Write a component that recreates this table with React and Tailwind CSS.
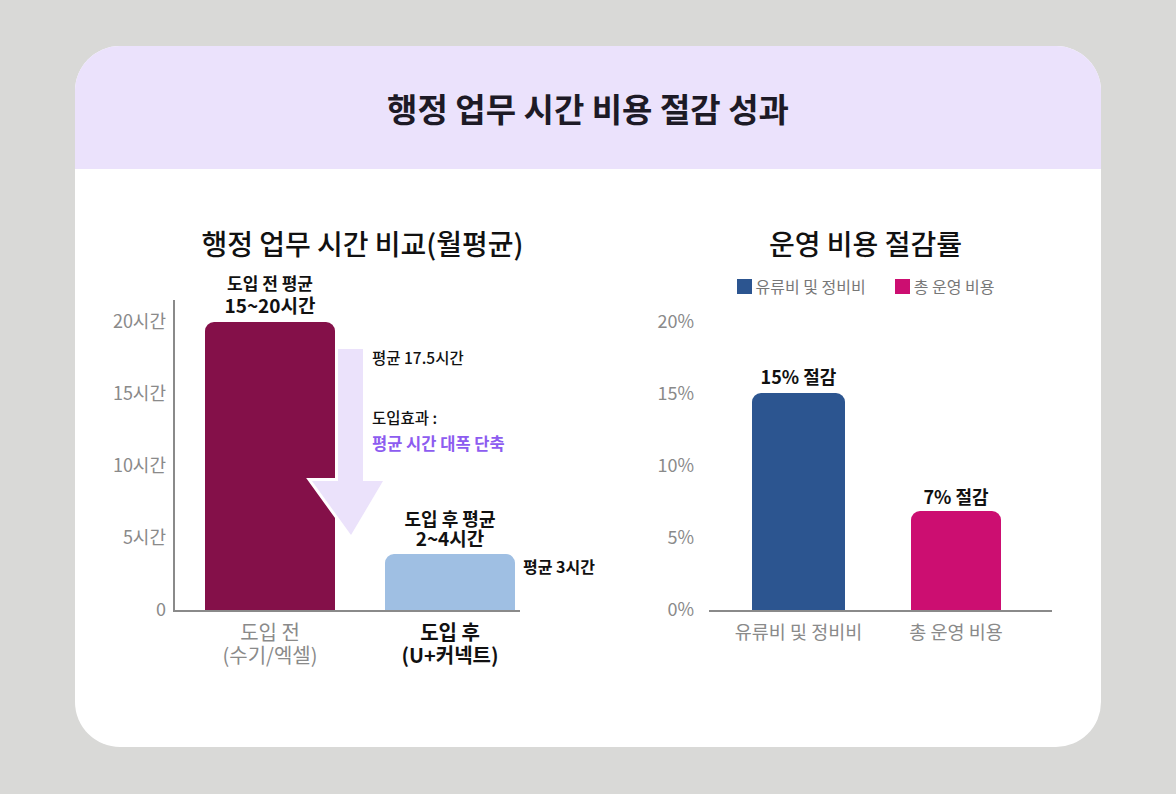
import React from "react";

const FONT = "font-['Noto_Sans_CJK_KR','Noto_Sans',sans-serif]";

const hourTicks = ["20시간", "15시간", "10시간", "5시간", "0"];
const pctTicks = ["20%", "15%", "10%", "5%", "0%"];

const YAxis = ({ ticks, width }) => (
  <div
    className={`${width} h-[318px] pt-[10px] flex flex-col justify-between items-end text-[18px] leading-[20px] text-[#8a8a8a]`}
  >
    {ticks.map((t) => (
      <span key={t}>{t}</span>
    ))}
  </div>
);

const TimeChart = () => (
  <div className="w-[575px] flex flex-col">
    <h2 className="mt-[57px] text-center text-[28px] leading-[34px] font-medium text-[#111]">
      행정 업무 시간 비교(월평균)
    </h2>

    <div className="ml-[25px] mt-[40px] flex items-start gap-[7px]">
      <YAxis ticks={hourTicks} width="w-[66px]" />

      <div className="flex flex-col">
        {/* plot */}
        <div className="relative w-[347px] h-[312px] border-l-2 border-b-2 border-[#8a8a8a] pl-[30px] flex items-end gap-[50px]">
          <div className="w-[130px] flex flex-col items-center">
            <div className="flex flex-col items-center font-semibold text-[#111] mb-[6px] whitespace-nowrap">
              <span className="text-[17px] leading-[22px]">도입 전 평균</span>
              <span className="text-[19px] leading-[22px]">15~20시간</span>
            </div>
            <div className="w-[130px] h-[288px] rounded-t-[9px] bg-[#841049]" />
          </div>

          <div className="w-[130px] flex flex-col items-center">
            <div className="flex flex-col items-center font-bold text-[#111] mb-[6px] whitespace-nowrap">
              <span className="text-[18px] leading-[20px]">도입 후 평균</span>
              <span className="text-[19px] leading-[20px]">2~4시간</span>
            </div>
            <div className="relative w-[130px] h-[56px] rounded-t-[9px] bg-[#9fbfe3]">
              <span className="absolute left-full ml-[8px] top-[2px] text-[16px] leading-[20px] font-bold text-[#111] whitespace-nowrap">
                평균 3시간
              </span>
            </div>
          </div>

          {/* arrow */}
          <svg
            className="absolute left-[130px] top-[40px]"
            width="90"
            height="205"
            viewBox="0 0 90 205"
          >
            <polygon
              points="33,9 58,9 58,141 78,141 46,195 7,141 33,141"
              fill="#ebe2fb"
              stroke="#ffffff"
              strokeWidth="6"
              strokeLinejoin="miter"
              paintOrder="stroke"
            />
          </svg>

          <div className="absolute left-[197px] top-[47px] flex flex-col leading-[20px] whitespace-nowrap">
            <span className="text-[15.5px] font-medium text-[#111]">평균 17.5시간</span>
            <span className="mt-[40px] text-[15.5px] font-medium text-[#111]">도입효과 :</span>
            <span className="mt-[6px] text-[16.5px] font-bold text-[#8d5cf0]">평균 시간 대폭 단축</span>
          </div>
        </div>

        {/* x labels */}
        <div className="pl-[32px] mt-[8px] flex gap-[50px] text-[20px] leading-[23px] whitespace-nowrap">
          <div className="w-[130px] flex flex-col items-center text-[#8a8a8a]">
            <span>도입 전</span>
            <span>(수기/엑셀)</span>
          </div>
          <div className="w-[130px] flex flex-col items-center font-bold text-[#111]">
            <span>도입 후</span>
            <span>(U+커넥트)</span>
          </div>
        </div>
      </div>
    </div>
  </div>
);

const CostChart = () => (
  <div className="w-[451px] pr-[20px] flex flex-col">
    <h2 className="mt-[57px] text-center text-[28px] leading-[34px] font-medium text-[#111]">
      운영 비용 절감률
    </h2>

    <div className="mt-[16px] flex justify-center gap-[29px] text-[16px] leading-[20px] text-[#777]">
      <div className="flex items-center gap-[4px]">
        <span className="w-[15px] h-[15px] bg-[#2c5590]" />
        <span>유류비 및 정비비</span>
      </div>
      <div className="flex items-center gap-[4px]">
        <span className="w-[15px] h-[15px] bg-[#cc0e71]" />
        <span>총 운영 비용</span>
      </div>
    </div>

    <div className="mt-[4px] flex items-start gap-[15px]">
      <YAxis ticks={pctTicks} width="w-[44px]" />

      <div className="flex flex-col">
        <div className="w-[343px] h-[312px] border-b-2 border-[#8a8a8a] pl-[43px] flex items-end gap-[66px]">
          <div className="w-[93px] flex flex-col items-center">
            <span className="mb-[6px] text-[18px] leading-[22px] font-semibold text-[#111] whitespace-nowrap">
              15% 절감
            </span>
            <div className="w-[93px] h-[217px] rounded-t-[9px] bg-[#2c5590]" />
          </div>
          <div className="w-[90px] flex flex-col items-center">
            <span className="mb-[4px] text-[18px] leading-[22px] font-semibold text-[#111] whitespace-nowrap">
              7% 절감
            </span>
            <div className="w-[90px] h-[99px] rounded-t-[9px] bg-[#cc0e71]" />
          </div>
        </div>

        <div className="pl-[43px] mt-[8px] flex gap-[66px] text-[18.5px] leading-[22px] text-[#8a8a8a] whitespace-nowrap">
          <div className="w-[93px] flex justify-center">
            <span>유류비 및 정비비</span>
          </div>
          <div className="w-[90px] flex justify-center">
            <span>총 운영 비용</span>
          </div>
        </div>
      </div>
    </div>
  </div>
);

export default function App() {
  return (
    <div className={`${FONT} w-full min-h-[794px] bg-[#d9d9d7] pt-[46px] pl-[75px]`}>
      <div className="w-[1026px] h-[701px] rounded-[45px] bg-white overflow-hidden flex flex-col">
        <header className="h-[123px] shrink-0 bg-[#ebe2fc] flex items-center justify-center">
          <h1 className="text-[33px] leading-[40px] font-bold text-[#1d1a26]">
            행정 업무 시간 비용 절감 성과
          </h1>
        </header>

        <div className="flex">
          <TimeChart />
          <CostChart />
        </div>
      </div>
    </div>
  );
}
